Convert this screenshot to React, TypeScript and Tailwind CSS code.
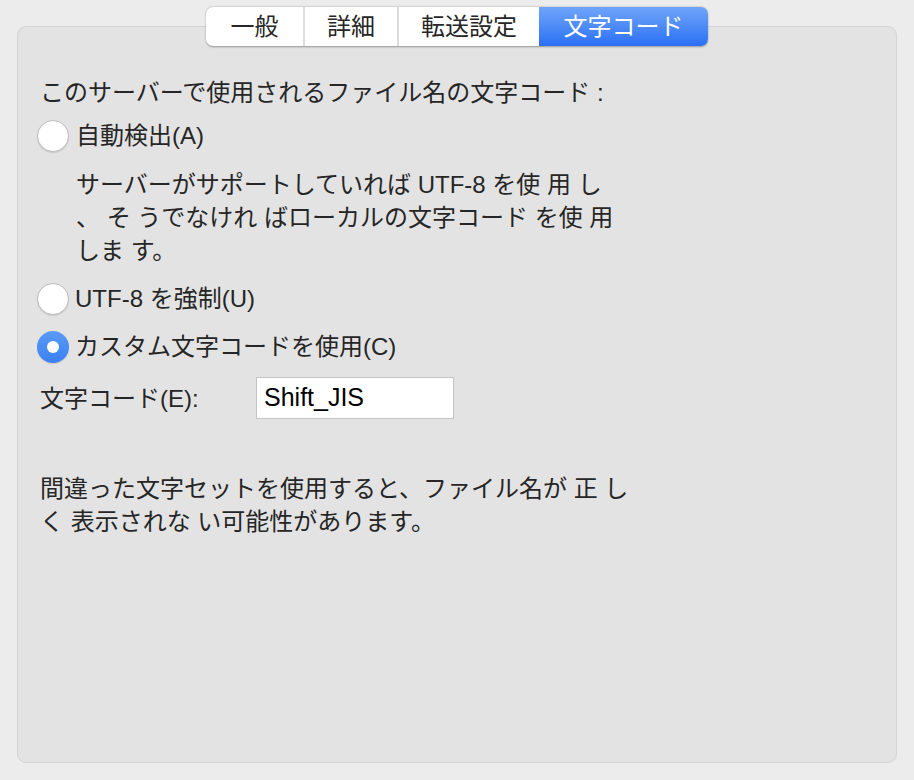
import React from "react";

const font = { fontFamily: '"Liberation Sans", "Noto Sans CJK JP", "Noto Sans", sans-serif' };

function Radio({ checked }: { checked?: boolean }) {
  if (checked) {
    return (
      <span className="flex h-[32px] w-[32px] shrink-0 items-center justify-center rounded-full bg-gradient-to-b from-[#5a9af6] to-[#3a80f2] shadow-[0_1px_1px_rgba(0,0,0,0.15)]">
        <span className="h-[12px] w-[12px] rounded-full bg-white" />
      </span>
    );
  }
  return (
    <span className="h-[32px] w-[32px] shrink-0 rounded-full border border-[#bdbdbd] bg-white shadow-[0_1px_1px_rgba(0,0,0,0.12)]" />
  );
}

export default function App() {
  return (
    <div
      className="flex h-[780px] w-[914px] flex-col items-center bg-[#ececec] pt-[7px] text-[24px] text-[#262626]"
      style={font}
    >
      <div className="relative z-10 flex h-[39px] overflow-hidden rounded-[7px] bg-white shadow-[0_0.5px_2px_rgba(0,0,0,0.35)]">
        <div className="flex w-[97px] items-center justify-center leading-none">一般</div>
        <div className="w-[2px] bg-[#dcdcdc]" />
        <div className="flex w-[92px] items-center justify-center leading-none">詳細</div>
        <div className="w-[2px] bg-[#dcdcdc]" />
        <div className="flex w-[140px] items-center justify-center leading-none">転送設定</div>
        <div className="flex w-[169px] items-center justify-center bg-gradient-to-b from-[#6fa4f8] to-[#2a6ff5] leading-none text-white">
          文字コード
        </div>
      </div>
      <div className="-mt-[20px] flex h-[737px] w-[880px] flex-col rounded-[9px] border border-[#d5d5d5] bg-[#e3e3e3] pl-[22px] pt-[49px]">
        <div className="h-[33px] leading-[33px]">このサーバーで使用されるファイル名の文字コード :</div>
        <div className="mt-[10px] -ml-[3px] flex h-[33px] items-center gap-[7px] leading-[33px]">
          <Radio />
          <span>自動検出(A)</span>
        </div>
        <div className="mt-[16px] ml-[36px] leading-[33px]">
          <div>サーバーがサポートしていれば UTF-8 を使 用 し</div>
          <div>、 そ うでなけれ ばローカルの文字コード を使 用</div>
          <div>しま す。</div>
        </div>
        <div className="mt-[15px] -ml-[3px] flex h-[33px] items-center gap-[6px] leading-[33px]">
          <Radio />
          <span>UTF-8 を強制(U)</span>
        </div>
        <div className="mt-[15px] -ml-[3px] flex h-[33px] items-center gap-[6px] leading-[33px]">
          <Radio checked />
          <span>カスタム文字コードを使用(C)</span>
        </div>
        <div className="mt-[14px] flex h-[42px] items-center">
          <span className="w-[216px] leading-[33px]">文字コード(E):</span>
          <div className="flex h-[42px] w-[198px] items-center border border-[#c4c4c4] bg-white pl-[7px] text-[25px] text-black">
            Shift_JIS
          </div>
        </div>
        <div className="mt-[53px] leading-[33px]">
          <div>間違った文字セットを使用すると、ファイル名が 正 し</div>
          <div>く 表示されな い可能性があります。</div>
        </div>
      </div>
    </div>
  );
}
